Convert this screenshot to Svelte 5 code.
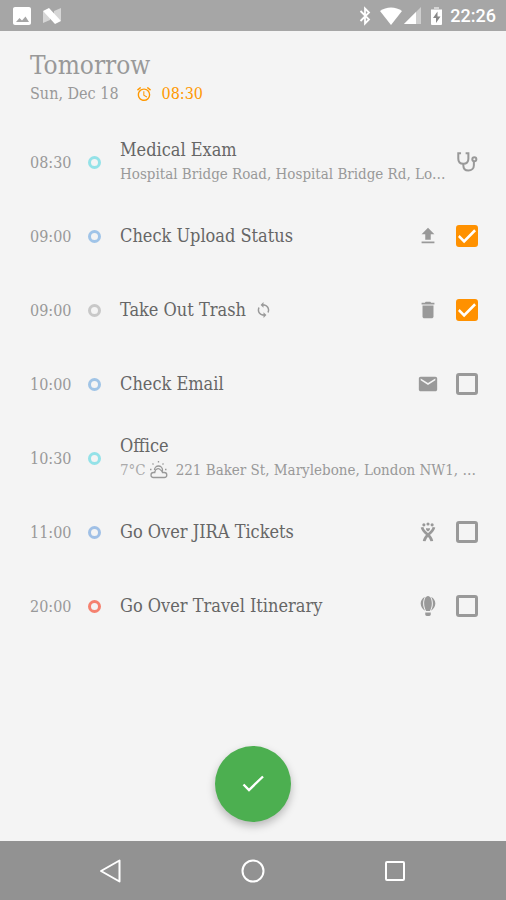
<script>
  let items = $state([
    { time: '08:30', color: '#94e2e8', title: 'Medical Exam', place: 'Hospital Bridge Road, Hospital Bridge Rd, Lo…', icon: 'stethoscope' },
    { time: '09:00', color: '#a0c4e8', title: 'Check Upload Status', icon: 'upload', task: true, done: true },
    { time: '09:00', color: '#c8c8c8', title: 'Take Out Trash', icon: 'trash', repeat: true, task: true, done: true },
    { time: '10:00', color: '#a0c4e6', title: 'Check Email', icon: 'mail', task: true, done: false },
    { time: '10:30', color: '#94e2e8', title: 'Office', temp: '7°C', place: '221 Baker St, Marylebone, London NW1, …' },
    { time: '11:00', color: '#a0c0e6', title: 'Go Over JIRA Tickets', icon: 'jira', task: true, done: false },
    { time: '20:00', color: '#f5816f', title: 'Go Over Travel Itinerary', icon: 'balloon', task: true, done: false }
  ]);
</script>

{#snippet glyph(name)}
  <svg class="glyph" viewBox="0 0 24 24" aria-hidden="true">
    {#if name === 'stethoscope'}
      <g fill="none" stroke="currentColor" stroke-width="2.200">
        <path d="M5.500 2.500H2.500V8.500c0 3.500 2.200 5.500 5.500 5.500s5.500-2 5.500-5.500V2.500H10.500" />
        <path d="M8 14v1.500c0 3.500 2 5.800 5.500 5.800s6-2.300 6-5.800v-4" />
        <circle cx="20" cy="9" r="2.200" />
      </g>
    {:else if name === 'upload'}
      <path d="M9 16h6v-6h4l-7-7-7 7h4zm-4 2h14v2H5z" />
    {:else if name === 'trash'}
      <path d="M6 19c0 1.100.9 2 2 2h8c1.100 0 2-.9 2-2V7H6v12zM19 4h-3.500l-1-1h-5l-1 1H5v2h14V4z" />
    {:else if name === 'mail'}
      <path d="M20 4H4c-1.100 0-1.990.9-1.990 2L2 18c0 1.100.9 2 2 2h16c1.100 0 2-.9 2-2V6c0-1.100-.9-2-2-2zm0 4-8 5-8-5V6l8 5 8-5v2z" />
    {:else if name === 'jira'}
      <circle cx="7.500" cy="4.200" r="1.700" />
      <circle cx="12" cy="3.200" r="1.700" />
      <circle cx="16.500" cy="4.200" r="1.700" />
      <path d="M12 11.500C10.300 10.400 9.500 9.300 10 8.200c.6-.9 1.600-.5 2 .2.400-.7 1.400-1.100 2-.2.500 1.100-.3 2.200-2 3.300z" />
      <path fill="none" stroke="currentColor" stroke-width="3" d="M5.500 6.800c.7 3.400 3 5.400 5.700 7.700 2.800 2.300 4.500 4.200 5 7.500M18.500 6.800c-.7 3.400-3 5.400-5.700 7.700-2.800 2.300-4.500 4.200-5 7.500" />
    {:else if name === 'balloon'}
      <path d="M8.600 2.200C5.600 3.500 4 6.200 4 9.300c0 3.400 2.200 6.200 4.900 8C7.400 14.700 6.700 12.100 6.700 9.300c0-2.600.6-5.200 1.900-7.100zM15.400 2.200c3 1.300 4.600 4 4.600 7.100 0 3.400-2.200 6.200-4.900 8 1.500-2.600 2.200-5.200 2.200-8 0-2.600-.6-5.200-1.900-7.100z" />
      <path d="M12 1.200c-2.700 0-4.200 4-4.200 8.100 0 3.200 1 6 2.200 8.200h4c1.200-2.200 2.200-5 2.200-8.200 0-4.100-1.500-8.100-4.200-8.100zM9 19.200h6v2.200c0 1-.7 1.600-1.600 1.600h-2.800c-.9 0-1.600-.6-1.600-1.600z" />
    {/if}
  </svg>
{/snippet}

<div class="screen">
  <div class="status">
    <svg width="18" height="18" viewBox="3 3 18 18" aria-label="Picture"><path fill="#fff" d="M21 19V5c0-1.100-.9-2-2-2H5c-1.100 0-2 .9-2 2v14c0 1.100.9 2 2 2h14c1.100 0 2-.9 2-2zM6 18l3.500-4 2.500 2.500 3.500-4L19 18z" /></svg>
    <svg class="nougat" width="18" height="16" viewBox="0 0 18 16" aria-label="Android">
      <path fill="#d6d6d6" d="M0 3l7 3v6l-7 3zM18 0v13l-7-4V3z" />
      <path fill="#fff" d="M0 3l6-3 12 13-6 3z" />
    </svg>
    <span class="spacer"></span>
    <svg width="12" height="20" viewBox="0 0 12 20" aria-label="Bluetooth"><path fill="none" stroke="#fff" stroke-width="1.800" d="M1.500 5l8.500 8.500-4 4v-15l4 4L1.500 15" /></svg>
    <svg class="wifi" width="22" height="18" viewBox="0 0 22 18" aria-label="Wi-Fi"><path fill="#fff" d="M0 4C6-.8 16-.8 22 4L11 18z" /></svg>
    <svg class="signal" width="17" height="17" viewBox="0 0 17 17" aria-label="Signal"><path fill="#cecece" d="M17 0v17H0z" /><path fill="#fff" d="M12 5v12H0z" /></svg>
    <svg class="battery" width="11" height="18" viewBox="0 0 11 18" aria-label="Charging"><path fill="#d4d4d4" d="M3 0h5v2h3v2H0V2h3z" /><path fill="#fff" d="M0 3h11v14a1 1 0 0 1-1 1H1a1 1 0 0 1-1-1z" /><path fill="#888" d="M6.500 4.500L2 11h3v5l4.500-6.500h-3z" /></svg>
    <span class="clock">22:26</span>
  </div>

  <main>
    <header>
      <h1>Tomorrow</h1>
      <p class="date">
        <span>Sun, Dec 18</span>
        <svg width="14" height="14" viewBox="2 2 20 20" aria-hidden="true"><path fill="currentColor" d="M22 5.720l-4.600-3.860-1.290 1.530 4.600 3.860L22 5.720zM7.880 3.390L6.600 1.860 2 5.710l1.290 1.530 4.590-3.850zM12.500 8H11v6l4.750 2.850.75-1.230-4-2.370V8zM12 4c-4.970 0-9 4.030-9 9s4.020 9 9 9a9 9 0 0 0 0-18zm0 16c-3.870 0-7-3.130-7-7s3.130-7 7-7 7 3.130 7 7-3.130 7-7 7z" /></svg>
        <span class="alarm">08:30</span>
      </p>
    </header>

    <ul>
      {#each items as item, i}
        <li>
          <span class="time">{item.time}</span>
          <span class="ring" style:border-color={item.color}></span>
          <div class="info">
            <div class="title">
              {#if item.task}
                <label for="item-{i}">{item.title}</label>
              {:else}
                <span>{item.title}</span>
              {/if}
              {#if item.repeat}
                <svg width="15" height="16" viewBox="2 1 20 22" aria-label="Repeats"><path fill="#999" d="M12 4V1L8 5l4 4V6c3.310 0 6 2.690 6 6 0 1.010-.25 1.970-.7 2.800l1.460 1.460A7.930 7.930 0 0 0 20 12c0-4.420-3.580-8-8-8zm0 14c-3.310 0-6-2.690-6-6 0-1.010.25-1.970.7-2.800L5.240 7.740A7.930 7.930 0 0 0 4 12c0 4.420 3.580 8 8 8v3l4-4-4-4v3z" /></svg>
              {/if}
            </div>
            {#if item.place}
              <div class="detail">
                {#if item.temp}
                  <span class="temp">{item.temp}</span>
                  <svg class="weather" width="18" height="18" viewBox="0 0 18 18" aria-label="Partly cloudy">
                    <g fill="none" stroke="#999" stroke-width="1.300">
                      <path d="M5 10.500a3 3 0 0 1 5.500-1.500c1 .3 1.800 1.200 2 2.500h1.800a2.500 2.500 0 0 1 0 5H3.500a2.500 2.500 0 0 1 0-5h1.300z" />
                      <path d="M4.500 9a4 4 0 1 1 8 0c0 1-.2 1.600-.6 2.200" />
                      <path d="M2.500 2.500l1 1M8.500 0v1.500M13.500 2.500l-1 1M0 8.500h1.500M15 8.500h1.500" />
                    </g>
                  </svg>
                {/if}
                <span class="place">{item.place}</span>
              </div>
            {/if}
          </div>
          {#if item.icon}{@render glyph(item.icon)}{/if}
          {#if item.task}<input id="item-{i}" type="checkbox" bind:checked={item.done} />{/if}
        </li>
      {/each}
    </ul>

    <button class="fab" aria-label="Done">
      <svg width="24" height="24" viewBox="0 0 24 24"><path fill="none" stroke="#fff" stroke-width="2.400" d="M2.500 12.500l5.500 5.500L22 4.500" /></svg>
    </button>
  </main>

  <nav>
    <button aria-label="Back"><svg width="24" height="24" viewBox="0 0 24 24"><path d="M20.500 1.500v21L2 12z" /></svg></button>
    <button aria-label="Home"><svg width="24" height="24" viewBox="0 0 24 24"><circle cx="12" cy="12" r="10.500" /></svg></button>
    <button aria-label="Overview"><svg width="24" height="24" viewBox="0 0 24 24"><rect x="3" y="3" width="18" height="18" rx="1" /></svg></button>
  </nav>
</div>

<style>
  :global(body) {
    margin: 0;
    background: #f4f4f4;
  }
  .screen {
    min-height: 100vh;
    display: flex;
    flex-direction: column;
    background: #f4f4f4;
    color: #999;
    font-family: 'Roboto Slab', 'DejaVu Serif Condensed', 'DejaVu Serif', serif;
  }
  svg {
    display: block;
    flex: none;
  }
  .status {
    height: 31px;
    box-sizing: border-box;
    display: flex;
    align-items: center;
    padding: 0 10px 0 13px;
    background: #a6a6a6;
  }
  .nougat {
    margin-left: 12px;
  }
  .spacer {
    flex: 1;
  }
  .wifi {
    margin-left: 9px;
  }
  .signal {
    margin-left: 2px;
  }
  .battery {
    margin: 0 8px 0 10px;
  }
  .clock {
    font: 500 18px/30px Roboto, sans-serif;
    color: #fff;
  }
  main {
    flex: 1;
    display: flex;
    flex-direction: column;
  }
  header {
    padding: 18px 28px 0 30px;
  }
  h1 {
    margin: 0;
    font-size: 26px;
    line-height: 32px;
    font-weight: 400;
  }
  .date {
    margin: 0;
    display: flex;
    align-items: center;
    font-size: 16px;
    line-height: 26px;
  }
  .date svg {
    margin: 0 11px 0 18px;
    color: #ff9800;
  }
  .alarm {
    color: #ff9800;
  }
  ul {
    list-style: none;
    margin: 18px 0 0;
    padding: 0 28px 0 30px;
  }
  li {
    height: 74px;
    display: flex;
    align-items: center;
  }
  .time {
    width: 58px;
    flex: none;
    font-size: 16px;
  }
  .ring {
    width: 13px;
    height: 13px;
    box-sizing: border-box;
    flex: none;
    margin-right: 19px;
    border: 3px solid;
    border-radius: 50%;
  }
  .info {
    flex: 1;
    min-width: 0;
  }
  .title {
    display: flex;
    align-items: center;
    gap: 10px;
    font-size: 18px;
    line-height: 24px;
    color: #666;
  }
  .detail {
    display: flex;
    align-items: center;
    font-size: 15px;
    line-height: 24px;
  }
  .temp {
    color: #aaa;
  }
  .weather {
    margin: 0 8px 0 4px;
  }
  .place {
    min-width: 0;
    overflow: hidden;
    white-space: nowrap;
    text-overflow: ellipsis;
  }
  .glyph {
    width: 22px;
    height: 22px;
    margin-left: 8px;
    fill: currentColor;
  }
  input {
    appearance: none;
    position: relative;
    box-sizing: border-box;
    flex: none;
    width: 22px;
    height: 22px;
    margin: 0 0 0 17px;
    border: 3px solid #999;
    border-radius: 3px;
  }
  input:checked {
    border-color: #ff9100;
    background: #ff9100;
  }
  input:checked::before {
    content: '';
    position: absolute;
    inset: -1px;
    background: #fff;
    clip-path: polygon(0 55%, 9% 44%, 34% 70%, 90% 13%, 100% 23%, 34% 90%);
  }
  .fab {
    width: 76px;
    height: 76px;
    margin: auto auto 19px;
    padding: 0;
    border: 0;
    border-radius: 50%;
    display: grid;
    place-items: center;
    background: #4caf50;
    box-shadow: 0 4px 8px rgba(0, 0, 0, 0.25);
  }
  nav {
    height: 59px;
    display: flex;
    justify-content: center;
    gap: 94px;
    background: #929292;
  }
  nav button {
    width: 48px;
    padding: 0;
    border: 0;
    background: none;
    display: grid;
    place-items: center;
  }
  nav path,
  nav circle,
  nav rect {
    fill: none;
    stroke: #fff;
    stroke-width: 2;
    stroke-linejoin: round;
  }
</style>
